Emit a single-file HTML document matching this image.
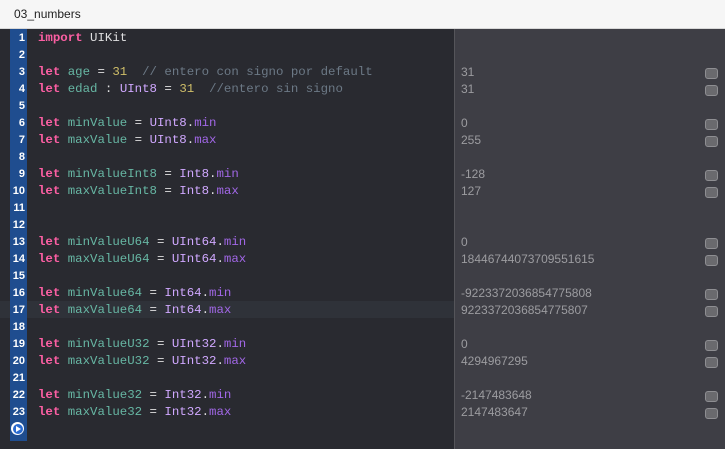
<!DOCTYPE html><html><head><meta charset="utf-8"><style>
body{margin:0;width:725px;height:449px;overflow:hidden;background:#292a30;font-family:"Liberation Sans",sans-serif}
#top{position:absolute;left:0;top:0;width:725px;height:28px;background:#f6f6f6;border-bottom:1px solid #d8d8d8}
#top span{position:absolute;left:14px;top:7px;font-size:12px;color:#222}
#ed{position:absolute;left:0;top:29px;width:454px;height:420px;background:#292a30}
#gut{position:absolute;left:10px;top:29px;width:17px;height:412px;background:#1f4d8f}
#side{position:absolute;left:454px;top:29px;width:271px;height:420px;background:#3e3e45;border-left:1px solid #55555a}
.ln{position:absolute;left:0;width:454px;height:17px;font-family:"Liberation Mono",monospace;font-size:12.4px;line-height:17px;color:#dfdfe0;white-space:pre}
.n{position:absolute;left:10px;width:15px;text-align:right;color:#fff;font-family:"Liberation Sans",sans-serif;font-size:11px;font-weight:bold}
.c{position:absolute;left:38px}
.k{color:#fc5fa3;font-weight:bold}.v{color:#67b7a4}.t{color:#d0a8ff}.m{color:#a167e6}.y{color:#d0bf69}.g{color:#6c7986}
.r{position:absolute;left:461px;font-size:12px;color:#9c9ca0;line-height:17px;height:17px}
.b{position:absolute;left:705px;width:11px;height:9px;border:1.5px solid #8e8e92;border-radius:3px;background:#6a6a6e}
</style></head><body>
<div id="top"><span>03_numbers</span></div>
<div id="ed"></div>
<div style="position:absolute;left:0;top:301px;width:454px;height:17px;background:#2f3239"></div>
<div id="gut"></div>
<div id="side"></div>
<div style="position:absolute;left:11px;top:422px;width:13px;height:13px;border-radius:50%;background:#fff"></div>
<div style="position:absolute;left:12.5px;top:423.5px;width:10px;height:10px;border-radius:50%;background:#2a6bd0"></div>
<div style="position:absolute;left:16px;top:425.5px;width:0;height:0;border-left:5px solid #fff;border-top:3px solid transparent;border-bottom:3px solid transparent"></div>
<div class="ln" style="top:30px"><span class="n">1</span><span class="c"><span class="k">import</span> UIKit</span></div>
<div class="ln" style="top:47px"><span class="n">2</span></div>
<div class="ln" style="top:64px"><span class="n">3</span><span class="c"><span class="k">let</span> <span class="v">age</span> = <span class="y">31</span>  <span class="g">// entero con signo por default</span></span></div>
<div class="ln" style="top:81px"><span class="n">4</span><span class="c"><span class="k">let</span> <span class="v">edad</span> : <span class="t">UInt8</span> = <span class="y">31</span>  <span class="g">//entero sin signo</span></span></div>
<div class="ln" style="top:98px"><span class="n">5</span></div>
<div class="ln" style="top:115px"><span class="n">6</span><span class="c"><span class="k">let</span> <span class="v">minValue</span> = <span class="t">UInt8</span>.<span class="m">min</span></span></div>
<div class="ln" style="top:132px"><span class="n">7</span><span class="c"><span class="k">let</span> <span class="v">maxValue</span> = <span class="t">UInt8</span>.<span class="m">max</span></span></div>
<div class="ln" style="top:149px"><span class="n">8</span></div>
<div class="ln" style="top:166px"><span class="n">9</span><span class="c"><span class="k">let</span> <span class="v">minValueInt8</span> = <span class="t">Int8</span>.<span class="m">min</span></span></div>
<div class="ln" style="top:183px"><span class="n">10</span><span class="c"><span class="k">let</span> <span class="v">maxValueInt8</span> = <span class="t">Int8</span>.<span class="m">max</span></span></div>
<div class="ln" style="top:200px"><span class="n">11</span></div>
<div class="ln" style="top:217px"><span class="n">12</span></div>
<div class="ln" style="top:234px"><span class="n">13</span><span class="c"><span class="k">let</span> <span class="v">minValueU64</span> = <span class="t">UInt64</span>.<span class="m">min</span></span></div>
<div class="ln" style="top:251px"><span class="n">14</span><span class="c"><span class="k">let</span> <span class="v">maxValueU64</span> = <span class="t">UInt64</span>.<span class="m">max</span></span></div>
<div class="ln" style="top:268px"><span class="n">15</span></div>
<div class="ln" style="top:285px"><span class="n">16</span><span class="c"><span class="k">let</span> <span class="v">minValue64</span> = <span class="t">Int64</span>.<span class="m">min</span></span></div>
<div class="ln" style="top:302px"><span class="n">17</span><span class="c"><span class="k">let</span> <span class="v">maxValue64</span> = <span class="t">Int64</span>.<span class="m">max</span></span></div>
<div class="ln" style="top:319px"><span class="n">18</span></div>
<div class="ln" style="top:336px"><span class="n">19</span><span class="c"><span class="k">let</span> <span class="v">minValueU32</span> = <span class="t">UInt32</span>.<span class="m">min</span></span></div>
<div class="ln" style="top:353px"><span class="n">20</span><span class="c"><span class="k">let</span> <span class="v">maxValueU32</span> = <span class="t">UInt32</span>.<span class="m">max</span></span></div>
<div class="ln" style="top:370px"><span class="n">21</span></div>
<div class="ln" style="top:387px"><span class="n">22</span><span class="c"><span class="k">let</span> <span class="v">minValue32</span> = <span class="t">Int32</span>.<span class="m">min</span></span></div>
<div class="ln" style="top:404px"><span class="n">23</span><span class="c"><span class="k">let</span> <span class="v">maxValue32</span> = <span class="t">Int32</span>.<span class="m">max</span></span></div>

<div class="r" style="top:64px">31</div><div class="b" style="top:68px"></div>
<div class="r" style="top:81px">31</div><div class="b" style="top:85px"></div>
<div class="r" style="top:115px">0</div><div class="b" style="top:119px"></div>
<div class="r" style="top:132px">255</div><div class="b" style="top:136px"></div>
<div class="r" style="top:166px">-128</div><div class="b" style="top:170px"></div>
<div class="r" style="top:183px">127</div><div class="b" style="top:187px"></div>
<div class="r" style="top:234px">0</div><div class="b" style="top:238px"></div>
<div class="r" style="top:251px">18446744073709551615</div><div class="b" style="top:255px"></div>
<div class="r" style="top:285px">-9223372036854775808</div><div class="b" style="top:289px"></div>
<div class="r" style="top:302px">9223372036854775807</div><div class="b" style="top:306px"></div>
<div class="r" style="top:336px">0</div><div class="b" style="top:340px"></div>
<div class="r" style="top:353px">4294967295</div><div class="b" style="top:357px"></div>
<div class="r" style="top:387px">-2147483648</div><div class="b" style="top:391px"></div>
<div class="r" style="top:404px">2147483647</div><div class="b" style="top:408px"></div>
</body></html>
